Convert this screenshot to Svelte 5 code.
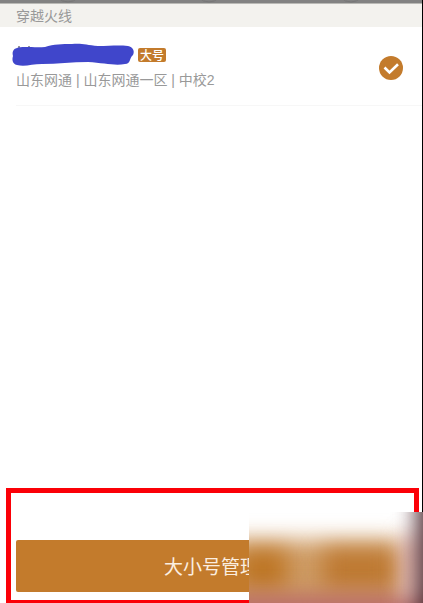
<script lang="ts">
	let gameName = '穿越火线';
	let role = {
		id: 'main',
		tag: '大号',
		area: '山东网通 | 山东网通一区 | 中校2'
	};
	let selected = role.id;
</script>

<main class="page">
	<div class="top-strip">
		<svg width="100%" height="4" aria-hidden="true">
			<g fill="none" stroke="#777">
				<circle cx="68" cy="-12" r="14" />
				<circle cx="209" cy="-12" r="14" />
				<circle cx="351" cy="-12" r="14" />
			</g>
		</svg>
	</div>
	<h1 class="game-name">{gameName}</h1>

	<label class="role">
		<span class="role-info">
			<span class="role-title">
				<svg class="scribble" width="123" height="24" viewBox="0 0 123 24" aria-hidden="true">
					<path d="M6 4h2M16 4h2" stroke="#333" stroke-width="1" />
					<path
						d="M5 5C9 3 24 5 33 4C42 1 50 1 60 1C70 0 74 2 86 3C98 3 106 2 116 3C121 4 123 8 121 12C117 15 119 21 113 21C103 23 92 20 76 19C60 19 45 21 30 21C20 21 13 24 5 22C0 21 0 16 1 13C0 9 1 6 5 5Z"
						fill="#4046cb"
					/>
				</svg>
				<span class="tag">{role.tag}</span>
			</span>
			<span class="role-area">{role.area}</span>
		</span>
		<input type="radio" name="role" value={role.id} bind:group={selected} />
		<svg class="check" width="24" height="24" viewBox="0 0 24 24" aria-hidden="true">
			<circle cx="12" cy="12" r="12" fill="#c37b2c" />
			<path d="M5.5 11.5l5 5L19 8.3" fill="none" stroke="#fff" stroke-width="2.6" />
		</svg>
	</label>

	<footer class="footer">
		<button class="manage-btn" type="button">大小号管理</button>
		<div class="highlight"></div>
		<div class="blur-patch">
			<div class="smudge band"></div>
			<div class="smudge spot-left"></div>
			<div class="smudge spot-right"></div>
			<div class="smudge bottom"></div>
			<div class="smudge pink"></div>
			<div class="smudge edge"></div>
		</div>
	</footer>
</main>

<style>
	:global(body) {
		margin: 0;
	}

	.page {
		box-sizing: border-box;
		display: flex;
		flex-direction: column;
		min-height: 100vh;
		border-right: 1px solid #000;
		background: #fff;
		font-family: 'Noto Sans CJK SC', 'Noto Sans', sans-serif;
	}

	.top-strip {
		height: 4px;
		background: linear-gradient(#828282 3px, #b9b9b5 3px);
	}

	.top-strip svg {
		display: block;
	}

	.game-name {
		margin: 0;
		padding: 0 16px;
		background: #f3f2ee;
		color: #999;
		font-size: 14px;
		font-weight: 400;
		line-height: 23px;
	}

	.role {
		display: flex;
		align-items: center;
		margin-left: 16px;
		padding: 16px 19px 12px 0;
		border-bottom: 1px solid #f7f7f7;
		cursor: pointer;
	}

	.role-info {
		display: flex;
		flex: 1;
		flex-direction: column;
	}

	.role-title {
		display: flex;
		align-items: center;
		gap: 3px;
		margin-left: -4px;
	}

	.tag {
		padding: 0 2px;
		border-radius: 2px;
		background: #c37b2c;
		color: #fff;
		font-size: 12px;
		font-weight: 500;
		line-height: 14px;
	}

	.role-area {
		color: #999;
		font-family: 'Liberation Sans', 'Noto Sans CJK SC', sans-serif;
		font-size: 14px;
		line-height: 26px;
	}

	.role input {
		position: absolute;
		opacity: 0;
	}

	.check {
		flex-shrink: 0;
	}

	.footer {
		position: relative;
		margin-top: auto;
		margin-right: -1px;
		padding: 52px 16px 11px;
		overflow: hidden;
	}

	.manage-btn {
		display: block;
		width: 100%;
		padding: 0;
		border: none;
		border-radius: 2px;
		background: #c37b2c;
		color: #fbeee0;
		font-family: inherit;
		font-size: 19px;
		line-height: 52px;
		cursor: pointer;
	}

	.highlight {
		position: absolute;
		inset: 0 4px -2px 6px;
		border: 5px solid #fb0007;
		pointer-events: none;
	}

	.blur-patch {
		position: absolute;
		right: 0;
		bottom: 0;
		width: 174px;
		height: 91px;
		background: #fff;
		overflow: hidden;
	}

	.smudge {
		position: absolute;
		filter: blur(11px);
	}

	.band {
		inset: 28px 20px -20px -40px;
		background: #cf9c65;
	}

	.spot-left {
		top: 38px;
		left: -10px;
		width: 48px;
		height: 38px;
		background: #bd7524;
	}

	.spot-right {
		top: 38px;
		left: 74px;
		width: 72px;
		height: 38px;
		background: #bd7830;
	}

	.bottom {
		inset: 84px -30px -30px -30px;
		background: #b8686a;
	}

	.pink {
		inset: 24px 2px 6px 156px;
		background: #e0a09a;
	}

	.edge {
		inset: -30px -40px -30px 168px;
		background: #4c2a30;
	}
</style>
